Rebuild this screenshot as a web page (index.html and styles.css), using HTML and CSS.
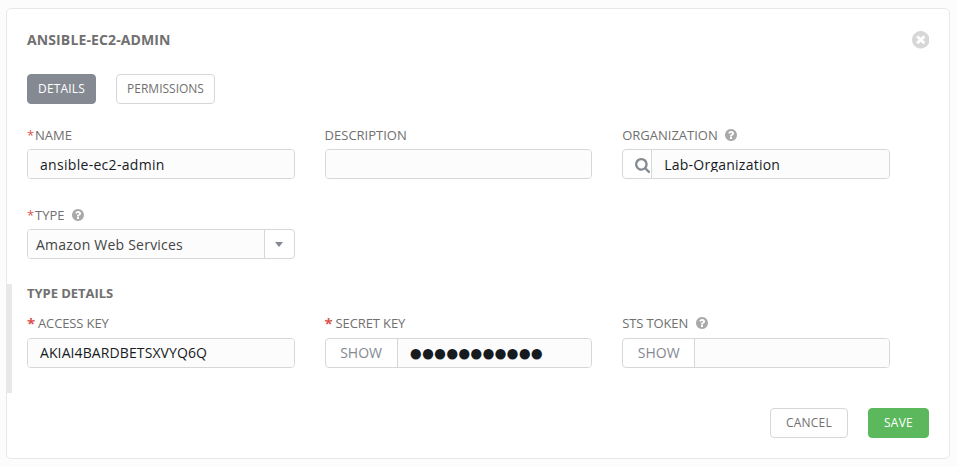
FILE: index.html
```html
<!DOCTYPE html>
<html lang="en">
<head>
<meta charset="utf-8">
<title>ansible-ec2-admin</title>
<link rel="stylesheet" href="styles.css">
</head>
<body>
<svg class="sprite" aria-hidden="true">
  <symbol id="help" viewBox="128 128 1536 1536"><path d="M1024 1376v-192q0-14-9-23t-23-9h-192q-14 0-23 9t-9 23v192q0 14 9 23t23 9h192q14 0 23-9t9-23zm256-672q0-88-55.500-163t-138.500-116-170-41q-243 0-371 213-15 24 8 42l132 100q7 6 19 6 16 0 25-12 53-68 86-92 34-24 86-24 48 0 85.500 26t37.500 59q0 38-20 61t-68 45q-63 28-115.500 86.500t-52.500 125.500v36q0 14 9 23t23 9h192q14 0 23-9t9-23q0-19 21.500-49.500t54.500-49.500q32-18 49-28.500t46-35 44.500-48 28-60.500 12.500-81zm384 192q0 209-103 385.500t-279.500 279.500-385.500 103-385.500-103-279.500-279.500-103-385.500 103-385.500 279.500-279.500 385.500-103 385.500 103 279.500 279.500 103 385.500z"/></symbol>
</svg>
<main class="panel">
  <header class="header">
    <h1 class="title">ANSIBLE-EC2-ADMIN</h1>
    <svg class="close" viewBox="128 128 1536 1536"><path d="M1277 1122q0-26-19-45l-181-181 181-181q19-19 19-45 0-27-19-46l-90-90q-19-19-46-19-26 0-45 19l-181 181-181-181q-19-19-45-19-27 0-46 19l-90 90q-19 19-19 46 0 26 19 45l181 181-181 181q-19 19-19 45 0 27 19 46l90 90q19 19 46 19 26 0 45-19l181-181 181 181q19 19 45 19 27 0 46-19l90-90q19-19 19-46zm387-226q0 209-103 385.500t-279.500 279.500-385.500 103-385.500-103-279.500-279.500-103-385.500 103-385.500 279.500-279.500 385.500-103 385.500 103 279.500 279.500 103 385.500z"/></svg>
  </header>
  <nav class="tabs">
    <button class="btn tab-details">DETAILS</button>
    <button class="btn tab-permissions">PERMISSIONS</button>
  </nav>
  <div class="grid">
    <div class="field">
      <div class="label"><span class="star">*</span><span>NAME</span></div>
      <div class="control"><div class="value">ansible-ec2-admin</div></div>
    </div>
    <div class="field">
      <div class="label">DESCRIPTION</div>
      <div class="control"><div class="value"></div></div>
    </div>
    <div class="field">
      <div class="label">ORGANIZATION<svg class="help"><use href="#help"/></svg></div>
      <div class="control">
        <div class="addon lookup"><svg class="search" viewBox="64 128 1664 1664"><path d="M1216 832q0-185-131.500-316.500t-316.500-131.500-316.500 131.500-131.500 316.500 131.500 316.500 316.500 131.500 316.500-131.500 131.500-316.500zm512 832q0 52-38 90t-90 38q-54 0-90-38l-343-342q-179 124-399 124-143 0-273.500-55.500t-225-150-150-225-55.500-273.500 55.500-273.500 150-225 225-150 273.500-55.500 273.500 55.500 225 150 150 225 55.500 273.500q0 220-124 399l343 343q37 37 37 90z"/></svg></div>
        <div class="value"><span class="clipped">Lab-Organization</span></div>
      </div>
    </div>
    <div class="field">
      <div class="label"><span class="star">*</span><span>TYPE</span><svg class="help"><use href="#help"/></svg></div>
      <div class="control">
        <div class="value selected">Amazon Web Services</div>
        <div class="arrow"><svg class="caret" viewBox="0 0 8 5"><path d="M0 0h8L4 5z"/></svg></div>
      </div>
    </div>
  </div>
  <section class="details">
    <h2 class="subtitle">TYPE DETAILS</h2>
    <div class="grid">
      <div class="field">
        <div class="label"><span class="star bold">*</span><span>ACCESS KEY</span></div>
        <div class="control"><div class="value key">AKIAI4BARDBETSXVYQ6Q</div></div>
      </div>
      <div class="field">
        <div class="label"><span class="star bold">*</span><span>SECRET KEY</span></div>
        <div class="control">
          <div class="addon show">SHOW</div>
          <div class="value secret">●●●●●●●●●●●</div>
        </div>
      </div>
      <div class="field">
        <div class="label">STS TOKEN<svg class="help"><use href="#help"/></svg></div>
        <div class="control">
          <div class="addon show">SHOW</div>
          <div class="value"></div>
        </div>
      </div>
    </div>
  </section>
  <footer class="actions">
    <button class="btn cancel">CANCEL</button>
    <button class="btn save">SAVE</button>
  </footer>
</main>
</body>
</html>
```
FILE: styles.css
```css
* { box-sizing: border-box; }
body {
  margin: 0;
  padding: 8px 8px 7px 6px;
  height: 466px;
  background: #fcfcfc;
  font-family: "Open Sans", sans-serif;
  font-size: 14px;
  color: #707070;
}
.sprite { display: none; }
.panel {
  height: 451px;
  border: 1px solid #e8e8e8;
  border-radius: 5px;
  background: #fff;
}
.header {
  display: flex;
  justify-content: space-between;
  align-items: flex-start;
  height: 20px;
  margin: 21px 20px 0;
}
.title { margin: 0; font-size: 14px; line-height: 20px; font-weight: 700; letter-spacing: 0.12px; }
.close { width: 17.5px; height: 17.5px; margin-top: 1px; fill: #d7d7d7; }
.tabs { display: flex; gap: 20px; margin: 24px 20px 0; }
.btn {
  height: 30px;
  padding: 0 0 2px;
  border: 1px solid #d7d7d7;
  border-radius: 4px;
  background: #fff;
  color: #707070;
  font: 12px/17px "Open Sans", sans-serif;
}
.tab-details { width: 69px; background: #848992; border-color: #848992; color: #fff; letter-spacing: 0.15px; }
.tab-permissions { width: 99px; }
.grid {
  display: grid;
  grid-template-columns: repeat(3, 267.6px);
  column-gap: 30px;
  row-gap: 30px;
  margin: 21px 20px 0;
}
.label {
  display: flex;
  align-items: center;
  height: 20px;
  margin-bottom: 4px;
  font-size: 13px;
  line-height: 18px;
}
.grid .field { height: 54px; }
.grid .field:nth-child(4) { margin-top: -4px; }
.star { color: #d9534f; width: 8px; }
.star.bold { width: 11px; font-weight: 700; font-size: 15px; }
.help { width: 12px; height: 12px; margin-left: 7.5px; fill: #a9a9a9; }
.control {
  display: flex;
  height: 30px;
  border: 1px solid #d7d7d7;
  border-radius: 4px;
  background: #fff;
  overflow: hidden;
}
.value {
  flex: 1;
  padding: 0 12px;
  background: #fcfcfc;
  color: #161b1f;
  font-size: 14px;
  line-height: 29px;
  letter-spacing: 0.3px;
  white-space: nowrap;
}
.clipped { display: block; height: 22px; overflow: hidden; letter-spacing: 0.24px; }
.selected { padding-left: 8px; color: #444; letter-spacing: 0.22px; }
.key { line-height: 27px; letter-spacing: 0.1px; }
.secret { padding-left: 11px; font-size: 24px; line-height: 25px; letter-spacing: -2.4px; }
.arrow {
  width: 30px;
  display: flex;
  align-items: center;
  justify-content: center;
  border-left: 1px solid #d7d7d7;
}
.caret { width: 8px; height: 5px; fill: #848992; }
.addon { border-right: 1px solid #d7d7d7; color: #848992; }
.lookup { width: 29px; padding: 8px 0 0 12px; }
.search { display: block; width: 15px; height: 15px; fill: #848992; }
.show { width: 72px; text-align: center; line-height: 28px; }
.details {
  height: 109px;
  margin-top: 25px;
  border-left: 5px solid #e8e8e8;
}
.details .grid { margin: 10px 15px 0; }
.details .label { margin-bottom: 5px; letter-spacing: -0.12px; }
.subtitle { margin: 0; padding-left: 15px; font-size: 13px; line-height: 19px; font-weight: 700; letter-spacing: -0.05px; }
.actions { display: flex; justify-content: flex-end; gap: 20px; margin: 15px 20px 0; }
.cancel { width: 78px; letter-spacing: 0.2px; }
.save { width: 61px; background: #5cb85c; border-color: #5cb85c; color: #fff; letter-spacing: 0.2px; }
```
